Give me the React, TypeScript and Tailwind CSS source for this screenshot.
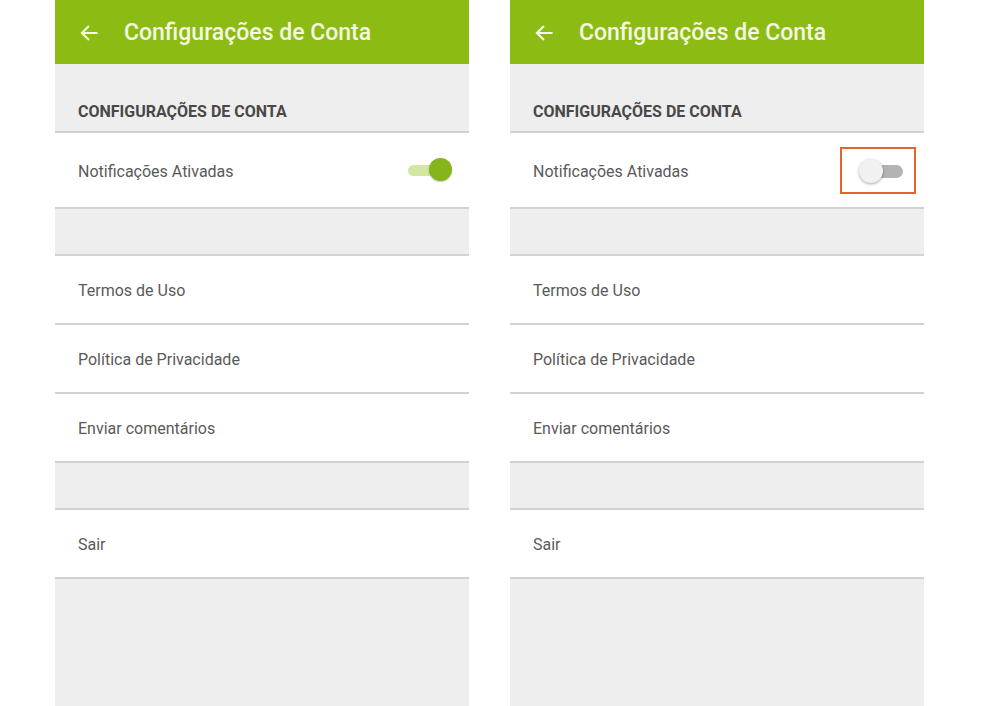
import React from "react";

function Divider() {
  return <div className="h-[2px] bg-[#d2d2d2]" />;
}

function Row({ label, children, tall }: { label: string; children?: React.ReactNode; tall?: boolean }) {
  return (
    <div className={`flex items-center justify-between bg-white pl-[23px] pr-[16px] ${tall ? "h-[74px]" : "h-[67px]"}`}>
      <span className="pt-[3px] text-[16px] text-[#5a5a5a]">{label}</span>
      {children}
    </div>
  );
}

function Toggle({ on }: { on: boolean }) {
  if (on) {
    return (
      <div className="relative mr-[1px] h-[24px] w-[46px]">
        <div className="absolute left-[2px] top-[7px] h-[11px] w-[34px] rounded-full bg-[#d3e6a4]" />
        <div className="absolute right-0 top-0 h-[23px] w-[23px] rounded-full bg-[#86b51b] shadow-[0_1px_2px_rgba(0,0,0,0.2)]" />
      </div>
    );
  }
  return (
    <div className="-mr-[8px] flex h-[47px] w-[76px] items-center justify-end border-2 border-[#e2652c] pr-[9px] pt-[2px]">
      <div className="relative h-[24px] w-[46px]">
        <div className="absolute right-[2px] top-[6px] h-[13px] w-[35px] rounded-full bg-[#b3b3b3]" />
        <div className="absolute left-0 top-0 h-[24px] w-[24px] rounded-full bg-[#f1f1f1] shadow-[0_1px_3px_rgba(0,0,0,0.35)]" />
      </div>
    </div>
  );
}

function Screen({ on }: { on: boolean }) {
  return (
    <div className="flex h-[706px] w-[414px] flex-col bg-[#eeeeee]">
      {/* Toolbar */}
      <div className="flex h-16 items-center bg-[#8cbb14] pl-[24px] pt-[2px]">
        <svg width="20" height="20" viewBox="0 0 24 24" fill="none" stroke="#f4f8e6" strokeWidth="2.6" strokeLinecap="square">
          <path d="M21 12H4M11 4.5 3.5 12l7.5 7.5" />
        </svg>
        <span className="ml-[25px] text-[23px] font-medium text-[#f4f8e0]">Configurações de Conta</span>
      </div>

      {/* Section header */}
      <div className="flex h-[67px] items-end pb-[7px] pl-[23px]">
        <span className="text-[16px] font-bold uppercase text-[#484848]">Configurações de Conta</span>
      </div>
      <Divider />
      <Row label="Notificações Ativadas" tall>
        <Toggle on={on} />
      </Row>
      <Divider />
      <div className="h-[45px]" />
      <Divider />
      <Row label="Termos de Uso" />
      <Divider />
      <Row label="Política de Privacidade" />
      <Divider />
      <Row label="Enviar comentários" />
      <Divider />
      <div className="h-[45px]" />
      <Divider />
      <Row label="Sair" />
      <Divider />
    </div>
  );
}

export default function App() {
  return (
    <div className="flex h-[706px] w-[984px] gap-[41px] overflow-hidden bg-white pl-[55px] font-['Roboto',sans-serif]">
      <Screen on />
      <Screen on={false} />
    </div>
  );
}
